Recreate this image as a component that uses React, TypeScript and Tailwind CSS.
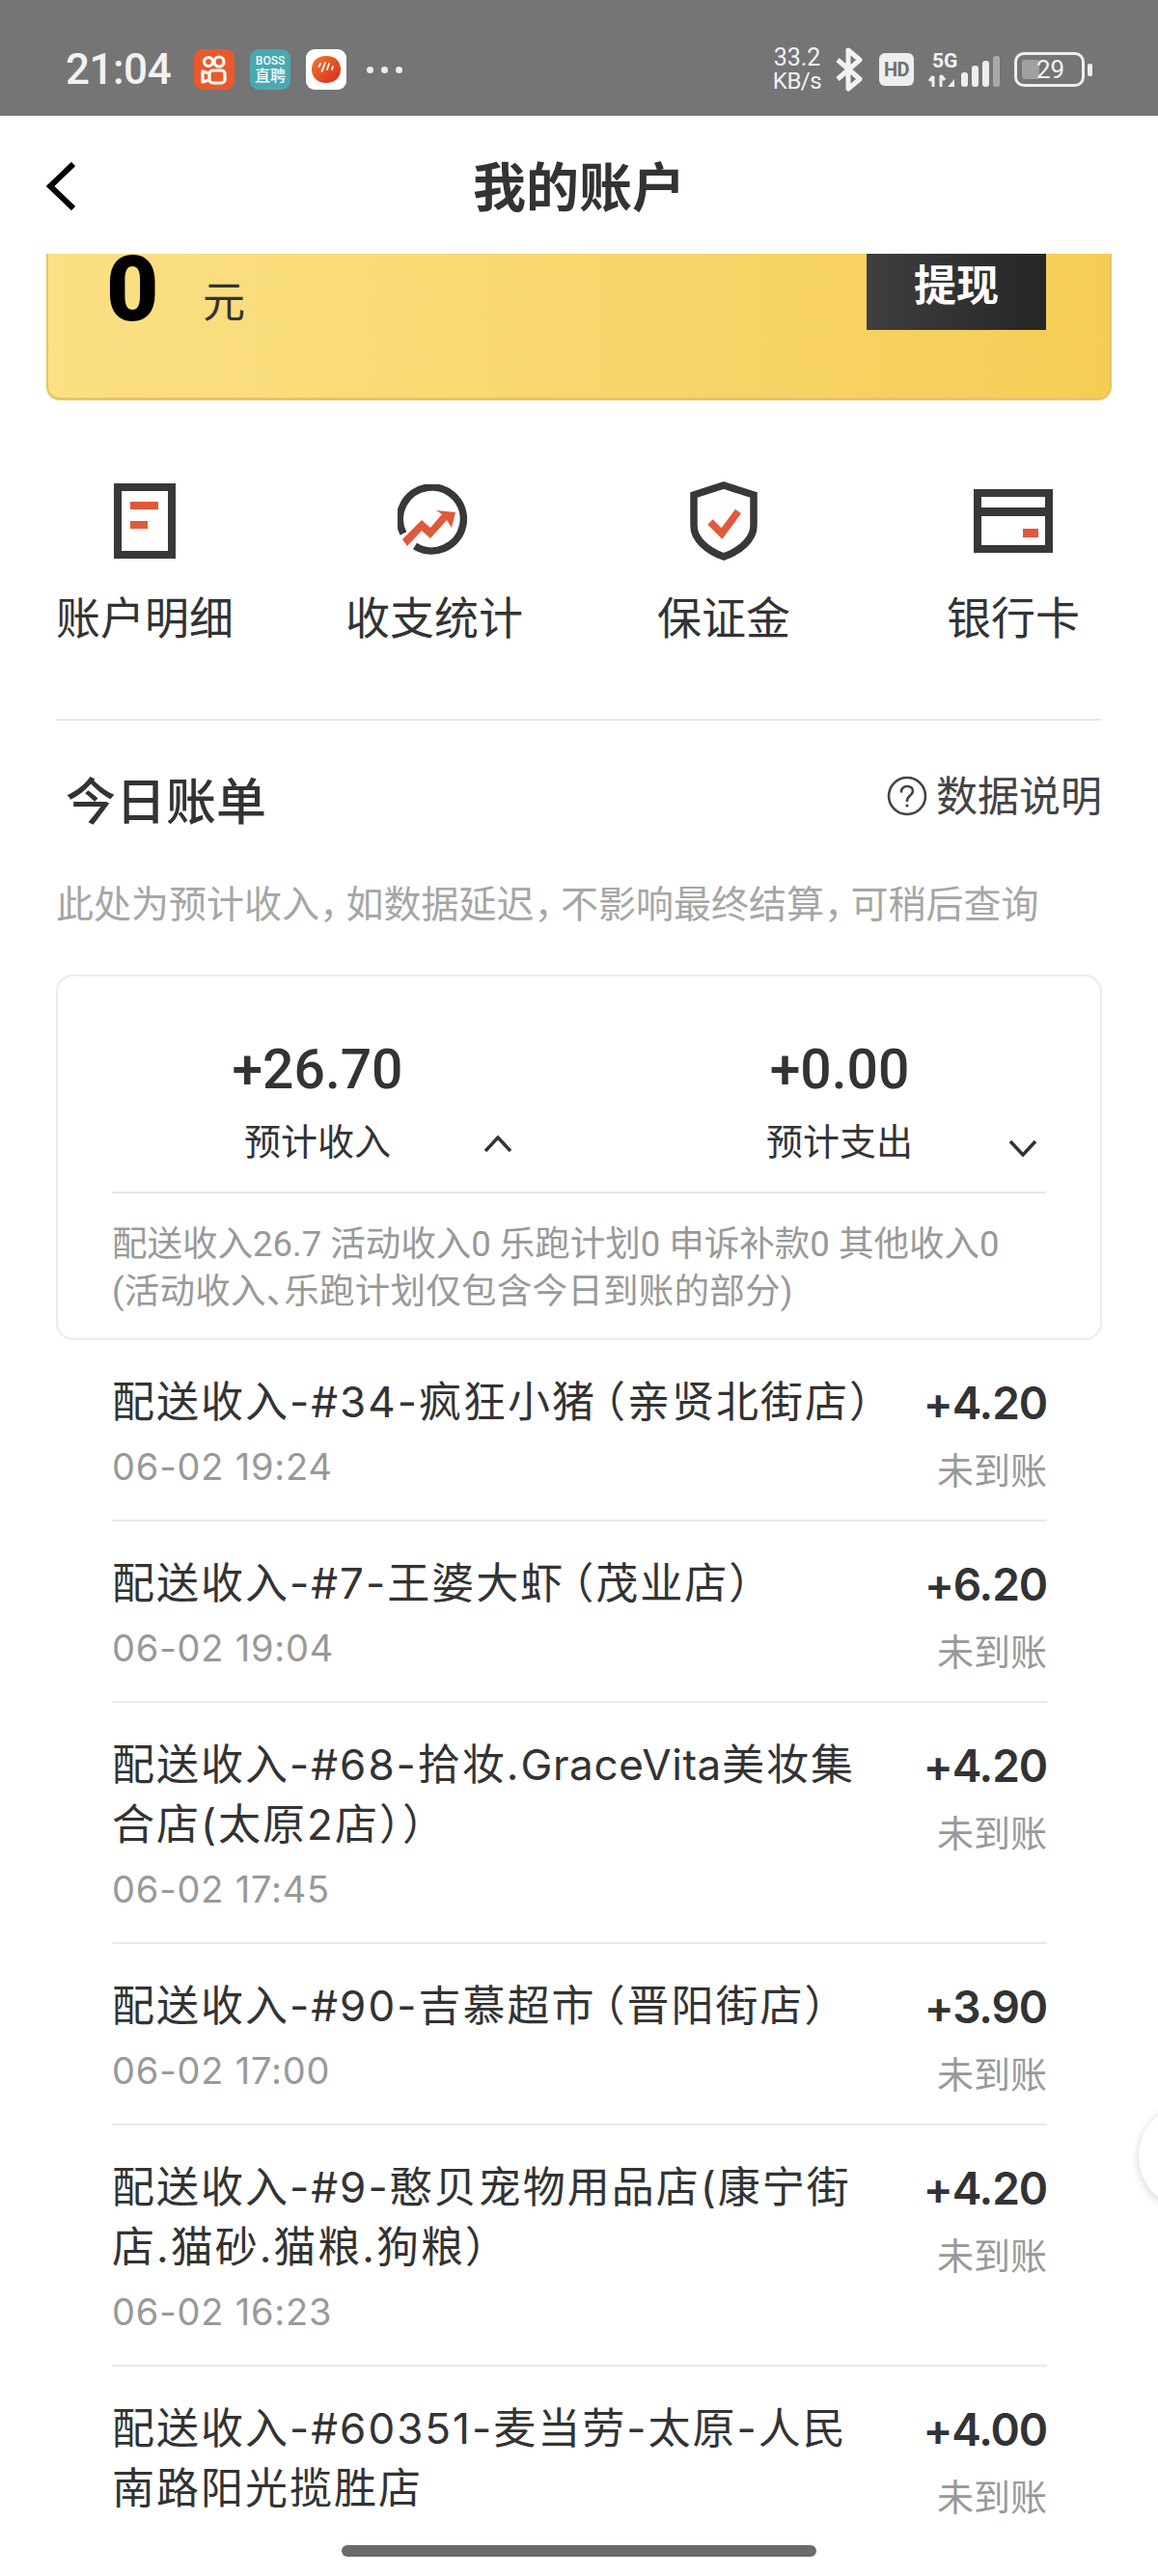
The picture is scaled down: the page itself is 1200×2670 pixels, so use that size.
import React from "react";

function Kuaishou() {
  return (
    <div className="w-[42px] h-[42px] rounded-[9px] bg-[#e95a2b] flex items-center justify-center">
      <svg viewBox="0 0 42 42" className="w-[42px] h-[42px]" fill="none" stroke="#fff" strokeWidth="3.2">
        <circle cx="15" cy="13" r="4.5" />
        <circle cx="26" cy="13" r="5" />
        <rect x="16" y="22" width="16" height="13" rx="3.5" />
        <path d="M15.5 25 L9 23 V34 L15.5 32" strokeLinejoin="round" />
      </svg>
    </div>
  );
}

function Boss() {
  return (
    <div className="w-[42px] h-[42px] rounded-[9px] bg-[#4aa9b0] flex flex-col items-center justify-center text-[#f2fbfb] leading-none">
      <span className="text-[12px] font-medium leading-[14px]">BOSS</span>
      <span className="text-[16px] font-medium leading-[18px]">直聘</span>
    </div>
  );
}

function RedApp() {
  return (
    <div className="w-[42px] h-[42px] rounded-[9px] bg-white flex items-center justify-center">
      <svg viewBox="0 0 42 42" className="w-[42px] h-[42px]" fill="none">
        <defs>
          <linearGradient id="ra" x1="0" y1="0" x2="1" y2="1">
            <stop offset="0" stopColor="#ee7a2c" />
            <stop offset="1" stopColor="#d92b1c" />
          </linearGradient>
        </defs>
        <path d="M21 7 C31 7 36 13 36 21 C36 30 29 35 21 35 C12 35 6 29 6 21 C6 12 12 7 21 7Z" fill="url(#ra)" />
        <path d="M15 15 l-1.5 3 M20 14 l-3.5 9 M24 15 l-2 6 M28 18 l-1 3" stroke="#fff" strokeWidth="1.8" strokeLinecap="round" />
      </svg>
    </div>
  );
}

function StatusBar() {
  return (
    <div className="h-[120px] bg-[#757575] flex items-center justify-between pl-[68px] pr-[68px] pt-[24px] text-[#f2f2f2] font-['Roboto','Noto_Sans_CJK_SC',sans-serif]">
      <div className="flex items-center">
        <span className="text-[44px] font-medium w-[133px] leading-none tracking-[-0.5px]">21:04</span>
        <div className="flex items-center gap-[16px]">
          <Kuaishou />
          <Boss />
          <RedApp />
        </div>
        <div className="flex gap-[8px] ml-[21px]">
          <span className="w-[7px] h-[7px] rounded-full bg-[#eee]" />
          <span className="w-[7px] h-[7px] rounded-full bg-[#eee]" />
          <span className="w-[7px] h-[7px] rounded-full bg-[#eee]" />
        </div>
      </div>
      <div className="flex items-center">
        <div className="flex flex-col items-center w-[50px] text-[25px] leading-[24px]">
          <span>33.2</span>
          <span className="text-[24px] tracking-[-0.5px]">KB/s</span>
        </div>
        <svg viewBox="0 0 30 46" className="w-[30px] h-[46px] ml-[14px]" fill="none" stroke="#f2f2f2" strokeWidth="5">
          <path d="M3 13 L26 33 L14 43 V3 L26 13 L3 33" strokeLinejoin="round" />
        </svg>
        <div className="w-[36px] h-[34px] ml-[16px] rounded-[6px] bg-[#eee] text-[#6f6f6f] flex items-center justify-center text-[20px] font-bold tracking-[-0.5px]">
          HD
        </div>
        <svg viewBox="0 0 75 46" className="w-[75px] h-[46px] ml-[14px]" fill="#eee">
          <text x="5" y="21" fontSize="21" fontWeight="700" fill="#f2f2f2" fontFamily="Roboto">5G</text>
          <path d="M6 30 V41 M2 35 L6 30 M14 29 V41 M14 29 L18 34" stroke="#eee" strokeWidth="3" fill="none" />
          <path d="M21 41 L28 33 V41Z" />
          <rect x="35" y="26" width="7" height="15" rx="3" />
          <rect x="46" y="19" width="7" height="22" rx="3" />
          <rect x="57" y="14" width="7" height="27" rx="3" />
          <rect x="68" y="9" width="7" height="32" rx="3" fill="#a9a9a9" />
        </svg>
        <div className="relative ml-[15px] mr-[8px] w-[73px] h-[36px] rounded-[10px] border-[3px] border-[#eee] flex items-center justify-center">
          <div className="absolute left-[5px] top-[5px] bottom-[5px] w-[18px] rounded-[3px] bg-[#a0a0a0]" />
          <span className="relative text-[26px] leading-none text-[#f2f2f2] ml-[2px]">29</span>
          <div className="absolute right-[-11px] top-[9px] w-[5px] h-[13px] rounded-[2px] bg-[#eee]" />
        </div>
      </div>
    </div>
  );
}

function Header() {
  return (
    <div className="relative h-[143px] bg-white flex items-center justify-center pt-[6px]">
      <svg viewBox="0 0 30 50" className="absolute left-[48px] top-[48px] w-[30px] h-[50px]" fill="none" stroke="#000" strokeWidth="6">
        <path d="M28 2 L4 25 L28 48" />
      </svg>
      <span className="text-[55px] leading-none font-bold text-[#333]">我的账户</span>
    </div>
  );
}

function BalanceCard() {
  return (
    <div className="mx-[48px] h-[152px] overflow-hidden rounded-b-[14px] border-x-2 border-b-[3px] border-[#e8c464] bg-gradient-to-r from-[#fbe084] to-[#f5cd55] flex justify-between pl-[60px] pr-[66px]">
      <div className="flex items-start">
        <span className="text-[94px] font-black leading-[74px] text-black w-[100px] font-['Roboto',sans-serif]">0</span>
        <span className="text-[44px] leading-none mt-[28px] text-[#333]">元</span>
      </div>
      <div className="w-[186px] h-[79px] bg-gradient-to-r from-[#3f3f3f] to-[#262626] flex items-center justify-center text-white text-[44px] font-bold leading-none pb-[14px]">
        提现
      </div>
    </div>
  );
}

const Dark = "#383838";
const Red = "#e2583a";

function DocIcon() {
  return (
    <svg viewBox="0 0 64 78" className="w-[64px] h-[78px]" fill="none">
      <rect x="4" y="4" width="56" height="70" stroke={Dark} strokeWidth="8" />
      <rect x="17" y="19" width="29" height="8" fill={Red} />
      <rect x="17" y="39" width="18" height="8" fill={Red} />
    </svg>
  );
}
function ChartIcon() {
  return (
    <svg viewBox="0 0 76 76" className="w-[76px] h-[76px]" fill="none">
      <path d="M6 51 A33 33 0 1 1 18 64" stroke={Dark} strokeWidth="7.5" />
      <path d="M5 57 L25 37 L34 45 L46 31 L40 27 L60 29 L56 45 L51 37 L34 56 L25 48 L10 64Z" fill={Red} />
    </svg>
  );
}
function ShieldIcon() {
  return (
    <svg viewBox="0 0 70 82" className="w-[70px] h-[82px]" fill="none">
      <path d="M35 4 L66 14 V46 C66 60 52 72 35 78 C18 72 4 60 4 46 V14Z" stroke={Dark} strokeWidth="7.5" strokeLinejoin="miter" />
      <path d="M21 42 L33 54 L50 31" stroke={Red} strokeWidth="7.5" />
    </svg>
  );
}
function CardIcon() {
  return (
    <svg viewBox="0 0 82 66" className="w-[82px] h-[66px]" fill="none">
      <rect x="4" y="4" width="74" height="58" stroke={Dark} strokeWidth="8" />
      <rect x="4" y="19" width="74" height="9" fill={Dark} />
      <rect x="51" y="41" width="16" height="9" fill={Red} />
    </svg>
  );
}

function Shortcut({ icon, label }: { icon: React.ReactNode; label: string }) {
  return (
    <div className="w-[240px] flex flex-col items-center">
      <div className="h-[82px] flex items-center justify-center">{icon}</div>
      <span className="mt-[29px] text-[46px] leading-[60px] text-[#333]">{label}</span>
    </div>
  );
}

function Shortcuts() {
  return (
    <div className="mx-[58px] mt-[84px] pb-[75px] border-b-2 border-[#e8e8e8]">
      <div className="-mx-[28px] flex justify-between">
        <Shortcut icon={<DocIcon />} label="账户明细" />
        <Shortcut icon={<ChartIcon />} label="收支统计" />
        <Shortcut icon={<ShieldIcon />} label="保证金" />
        <Shortcut icon={<CardIcon />} label="银行卡" />
      </div>
    </div>
  );
}

function Summary() {
  return (
    <div className="mx-[58px] h-[379px] rounded-[18px] border-2 border-[#ececec] px-[56px]">
      <div className="h-[225px] border-b-2 border-[#e8e8e8] flex">
        <div className="relative w-[540px] pr-[114px] pt-[65px] flex flex-col items-center">
          <span className="text-[57px] leading-[64px] font-medium text-[#333] font-['Roboto',sans-serif]">+26.70</span>
          <span className="mt-[17px] text-[38px] leading-[50px] text-[#333]">预计收入</span>
          <svg viewBox="0 0 30 18" className="absolute left-[385px] top-[164px] w-[30px] h-[18px]" fill="none" stroke="#333" strokeWidth="3.5">
            <path d="M2 17 L15 3 L28 17" />
          </svg>
        </div>
        <div className="relative w-[428px] pt-[65px] flex flex-col items-center">
          <span className="text-[57px] leading-[64px] font-medium text-[#333] font-['Roboto',sans-serif]">+0.00</span>
          <span className="mt-[17px] text-[38px] leading-[50px] text-[#333]">预计支出</span>
          <svg viewBox="0 0 30 18" className="absolute left-[389px] top-[169px] w-[30px] h-[18px]" fill="none" stroke="#333" strokeWidth="3.5">
            <path d="M2 2 L15 16 L28 2" />
          </svg>
        </div>
      </div>
      <p className="mt-[28px] text-[36.5px] leading-[49px] text-[#999] whitespace-nowrap [font-feature-settings:'halt'] font-['Roboto','Noto_Sans_CJK_SC',sans-serif]">
        配送收入26.7 活动收入0 乐跑计划0 申诉补款0 其他收入0
        <br />
        <span className="tracking-[0.25px]">(活动收入、乐跑计划仅包含今日到账的部分)</span>
      </p>
    </div>
  );
}

function Open() {
  return <span className="ml-[8px] [font-feature-settings:'halt']">（</span>;
}

type RowData = { lines: React.ReactNode[]; date: string; price: string };

const rows: RowData[] = [
  { lines: [<>配送收入-#34-疯狂小猪<Open />亲贤北街店）</>], date: "06-02 19:24", price: "+4.20" },
  { lines: [<>配送收入-#7-王婆大虾<Open />茂业店）</>], date: "06-02 19:04", price: "+6.20" },
  { lines: [<>配送收入-#68-拾妆.<span className="tracking-[0.6px]">GraceVita</span>美妆集</>, "合店(太原2店））"], date: "06-02 17:45", price: "+4.20" },
  { lines: [<>配送收入-#90-吉慕超市<Open />晋阳街店）</>], date: "06-02 17:00", price: "+3.90" },
  { lines: ["配送收入-#9-憨贝宠物用品店(康宁街", "店.猫砂.猫粮.狗粮）"], date: "06-02 16:23", price: "+4.20" },
  { lines: ["配送收入-#60351-麦当劳-太原-人民", "南路阳光揽胜店"], date: "", price: "+4.00" },
];

function Row({ row }: { row: RowData }) {
  return (
    <div className="border-b-2 border-[#e8e8e8] last:border-b-0 flex justify-between pt-[33px]">
      <div className="min-w-0 pb-[31px]">
        {row.lines.map((l, i) => (
          <div key={i} className="text-[44px] leading-[62px] tracking-[2px] text-[#333] whitespace-nowrap">
            {l}
          </div>
        ))}
        {row.date && <div className="mt-[12px] text-[38px] leading-[48px] tracking-[0.8px] text-[#999]">{row.date}</div>}
      </div>
      <div className="flex flex-col items-end shrink-0">
        <span className="text-[46px] leading-[64px] font-semibold text-[#333] tracking-[-1.1px]">{row.price}</span>
        <span className="mt-[13px] text-[38px] leading-[50px] text-[#999]">未到账</span>
      </div>
    </div>
  );
}

export default function App() {
  return (
    <div className="relative w-[1200px] h-[2670px] overflow-hidden bg-white font-['Inter','Noto_Sans_CJK_SC',sans-serif]">
      <StatusBar />
      <Header />
      <BalanceCard />
      <Shortcuts />
      <div className="mx-[58px] mt-[52px] flex justify-between items-start">
        <span className="ml-[10px] text-[52px] leading-[66px] font-medium text-[#333]">今日账单</span>
        <div className="-mt-[3px] flex items-center gap-[9px]">
          <svg viewBox="0 0 42 42" className="w-[42px] h-[42px]" fill="none" stroke="#444" strokeWidth="2.6">
            <circle cx="21" cy="21" r="19" />
            <path d="M15 16.5 C15 13 17.6 11 21 11 C24.5 11 27 13 27 16 C27 20.5 21 20.5 21 26" strokeLinecap="round" />
            <circle cx="21" cy="31" r="1.6" fill="#444" stroke="none" />
          </svg>
          <span className="text-[43px] leading-[58px] text-[#444]">数据说明</span>
        </div>
      </div>
      <p className="mx-[58px] mt-[45px] text-[39px] leading-[54px] text-[#a6a6a6] whitespace-nowrap [font-feature-settings:'halt']">
        此处为预计收入<span className="mr-[8px]">，</span>如数据延迟<span className="mr-[8px]">，</span>不影响最终结算<span className="mr-[8px]">，</span>可稍后查询
      </p>
      <div className="mt-[46px]">
        <Summary />
      </div>
      <div className="ml-[116px] w-[969px]">
        {rows.map((r, i) => (
          <Row key={i} row={r} />
        ))}
      </div>
      <div className="absolute left-[1180px] top-[2180px] w-[110px] h-[110px] rounded-full bg-white shadow-[0_2px_10px_rgba(0,0,0,0.18)]" />
      <div className="absolute left-[354px] top-[2638px] w-[492px] h-[12px] rounded-full bg-[#6b6b6b]" />
    </div>
  );
}
